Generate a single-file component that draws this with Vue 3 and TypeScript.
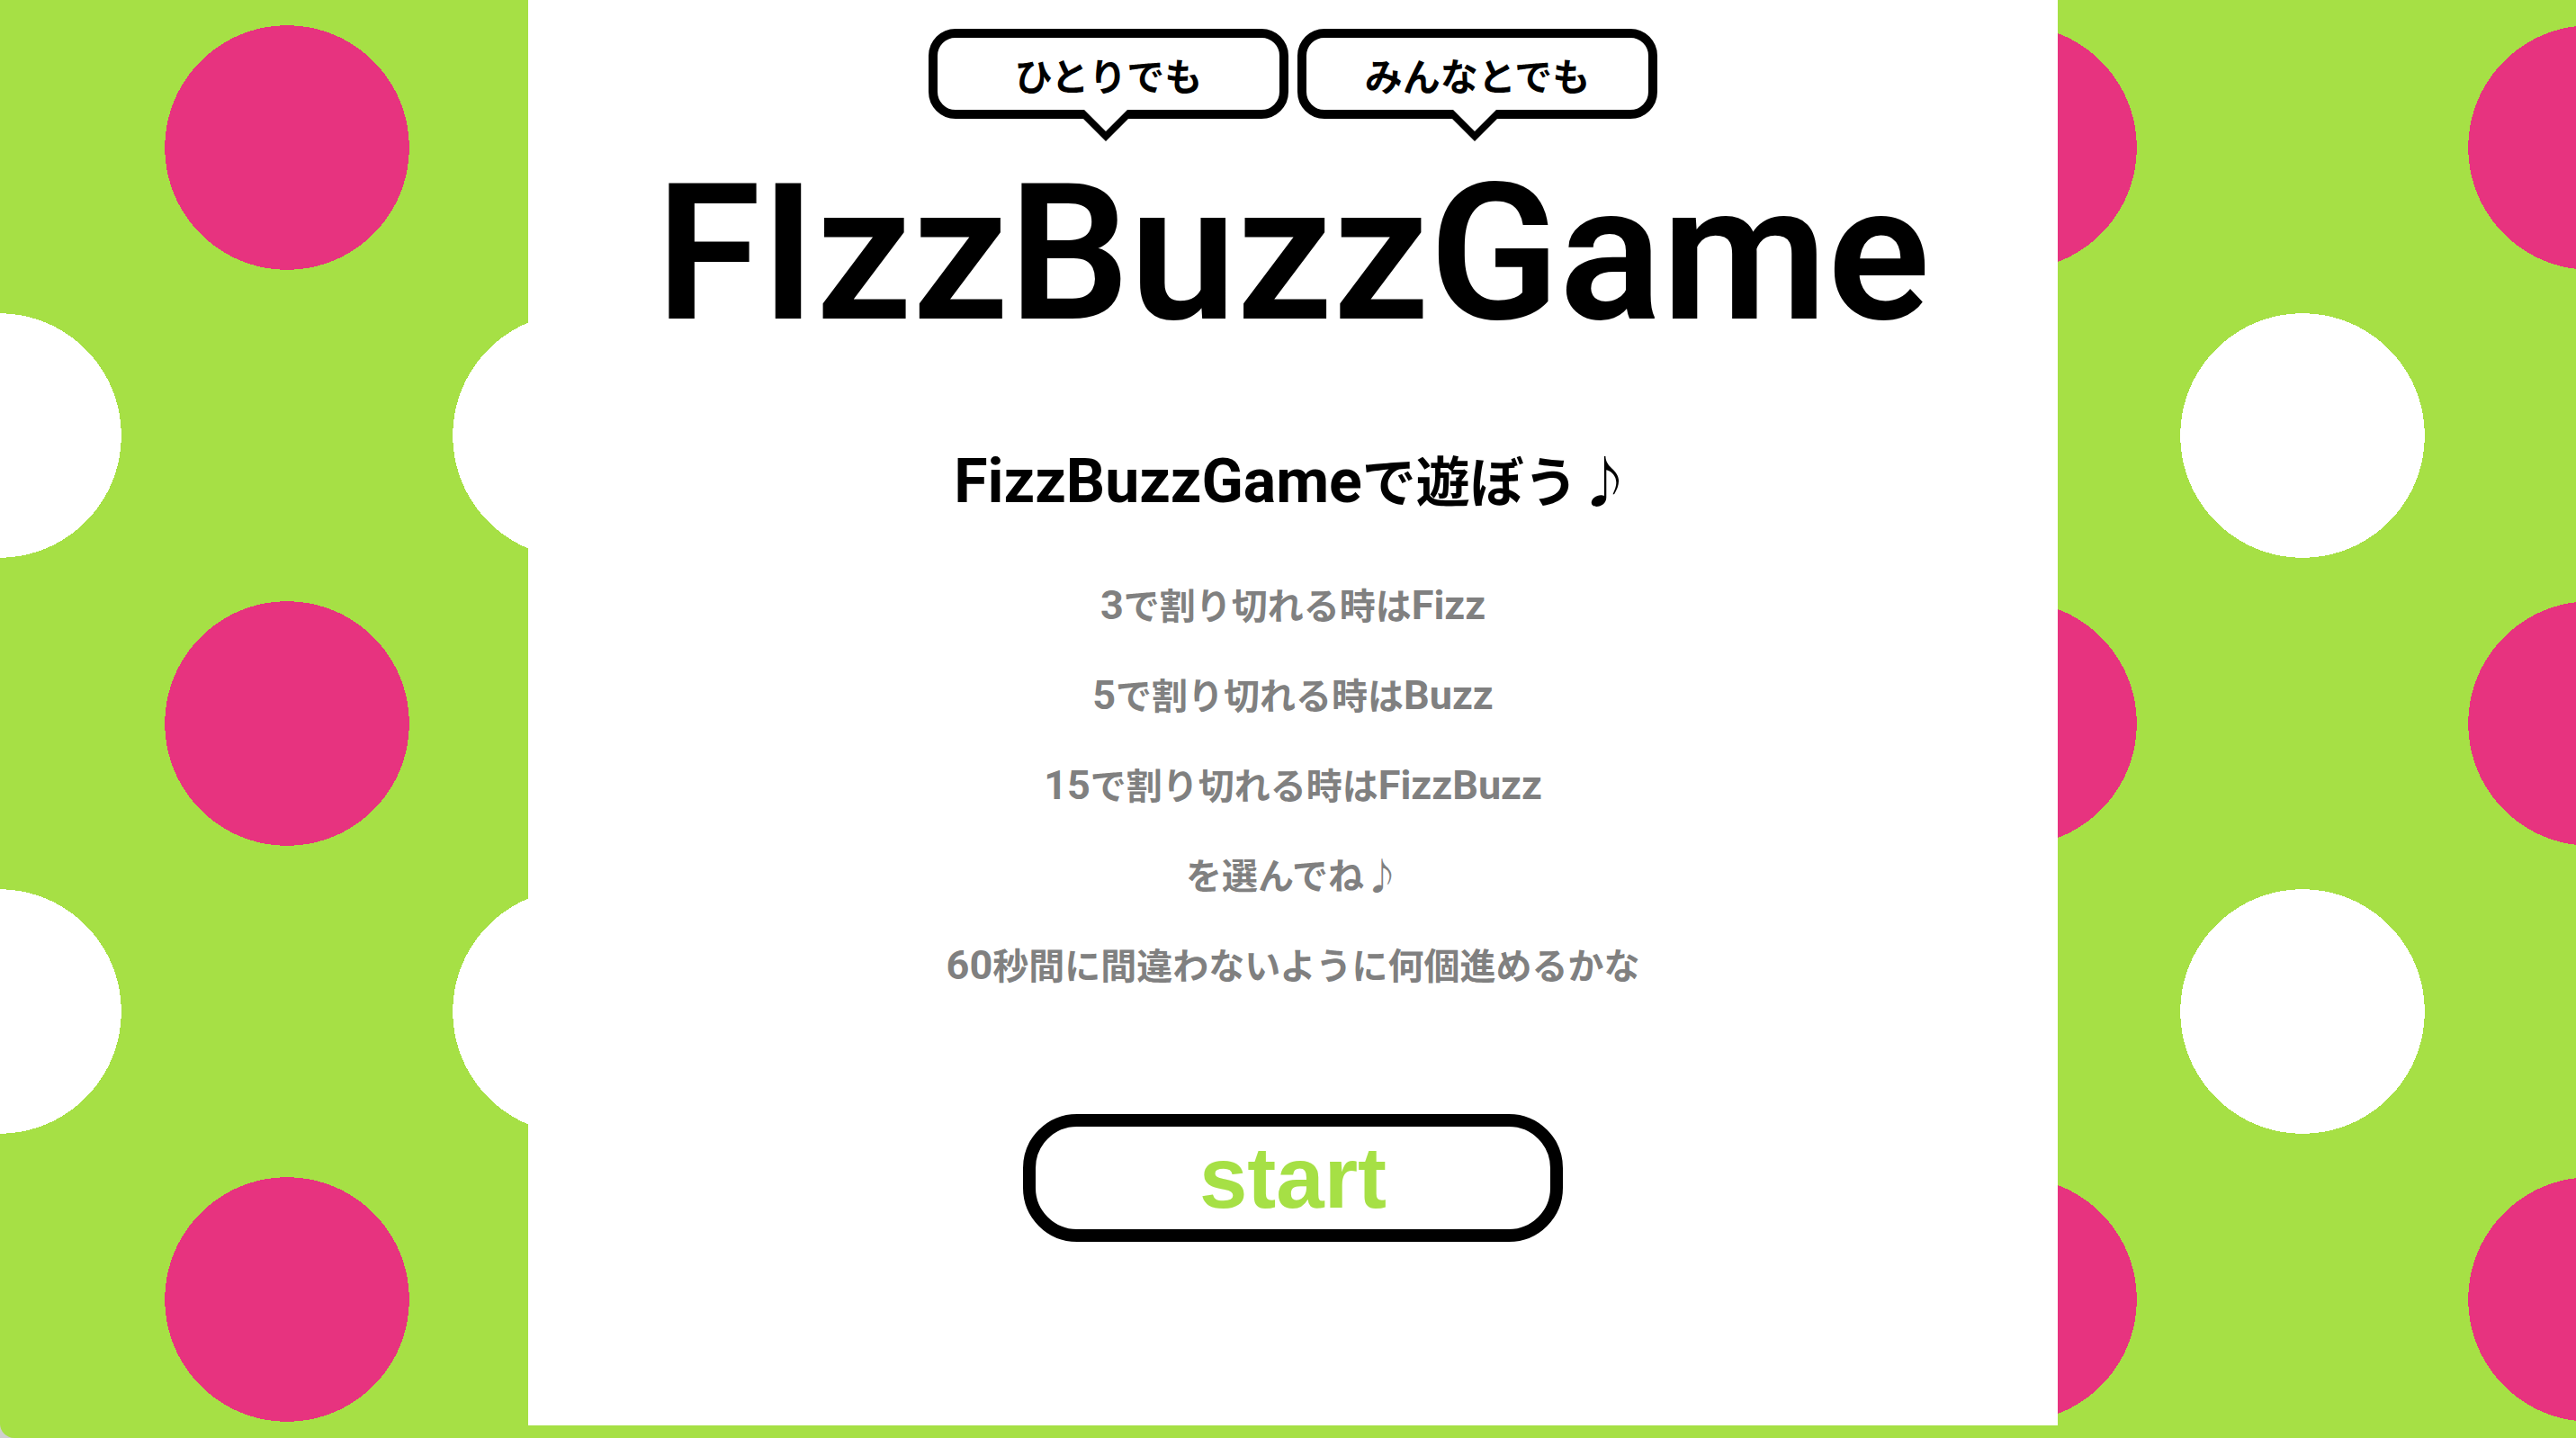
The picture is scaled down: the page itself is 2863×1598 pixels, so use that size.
<script setup lang="ts">
import { ref } from 'vue'

interface Part {
  text: string
  latin?: boolean
}

const bubbles: string[] = ['ひとりでも', 'みんなとでも']

const rules: Part[][] = [
  [{ text: '3', latin: true }, { text: 'で割り切れる時は' }, { text: 'Fizz', latin: true }],
  [{ text: '5', latin: true }, { text: 'で割り切れる時は' }, { text: 'Buzz', latin: true }],
  [{ text: '15', latin: true }, { text: 'で割り切れる時は' }, { text: 'FizzBuzz', latin: true }],
  [{ text: 'を選んでね♪' }],
  [{ text: '60', latin: true }, { text: '秒間に間違わないように何個進めるかな' }],
]

const started = ref(false)

function start(): void {
  started.value = true
}
</script>

<template>
  <div class="page">
    <main class="panel">
      <ul class="bubbles">
        <li v-for="label in bubbles" :key="label" class="bubble">{{ label }}</li>
      </ul>
      <h1 class="title">FIzzBuzzGame</h1>
      <h2 class="lead"><span class="latin">FizzBuzzGame</span>で遊ぼう♪</h2>
      <div class="rules">
        <p v-for="(rule, i) in rules" :key="i" class="rule">
          <span v-for="(part, j) in rule" :key="j" :class="{ latin: part.latin }">{{ part.text }}</span>
        </p>
      </div>
      <button type="button" class="start" :aria-pressed="started" @click="start">start</button>
    </main>
  </div>
</template>

<style>
body {
  margin: 0;
  background: #cfcfcf;
}
</style>

<style scoped>
.page {
  box-sizing: border-box;
  min-height: 100vh;
  padding: 0 0 14px 11px;
  border-bottom-left-radius: 16px;
  background-color: #a6e045;
  background-image:
    radial-gradient(circle, #e7337f 30%, transparent 30%),
    radial-gradient(circle, #ffffff 30%, transparent 30%);
  background-size: 640px 640px;
  background-position: -1px -156px, 319px 164px;
  font-family: "Noto Sans CJK JP", sans-serif;
  font-weight: 700;
  color: #000000;
}

.panel {
  box-sizing: border-box;
  max-width: 1700px;
  margin: 0 auto;
  padding: 32px 0 204px;
  display: flex;
  flex-direction: column;
  align-items: center;
  background: #ffffff;
  text-align: center;
}

.bubbles {
  display: flex;
  gap: 10px;
  margin: 0;
  padding: 0;
  list-style: none;
}

.bubble {
  position: relative;
  box-sizing: border-box;
  width: 400px;
  height: 100px;
  border: 10px solid #000000;
  border-radius: 30px;
  background: #ffffff;
  font-size: 42px;
  line-height: 82px;
}

.bubble::before,
.bubble::after {
  content: "";
  position: absolute;
  top: 100%;
  left: 50%;
  border-style: solid;
  border-color: transparent;
}

.bubble::before {
  margin-left: -38px;
  border-width: 35px 35px 0;
  border-top-color: #000000;
}

.bubble::after {
  margin-left: -27px;
  border-width: 24px 24px 0;
  border-top-color: #ffffff;
}

.title {
  margin: 30px 0 0;
  font-family: Roboto, sans-serif;
  font-weight: 600;
  font-size: 212px;
  line-height: 240px;
}

.lead {
  margin: 85px 0 0;
  font-size: 60px;
  line-height: 90px;
}

.latin {
  font-family: Roboto, sans-serif;
  line-height: 1;
}

.lead .latin {
  font-size: 68px;
}

.rules {
  display: flex;
  flex-direction: column;
  gap: 40px;
  margin-top: 64px;
  color: #808080;
}

.rule {
  margin: 0;
  font-size: 40px;
  line-height: 60px;
}

.rule .latin {
  font-size: 45px;
}

.start {
  box-sizing: border-box;
  width: 600px;
  margin-top: 137px;
  padding: 2px 0;
  border: 14px solid #000000;
  border-radius: 60px;
  background: #ffffff;
  font-family: "Liberation Sans", sans-serif;
  font-weight: 700;
  font-size: 96px;
  line-height: 110px;
  color: #a6e045;
  cursor: pointer;
}
</style>
